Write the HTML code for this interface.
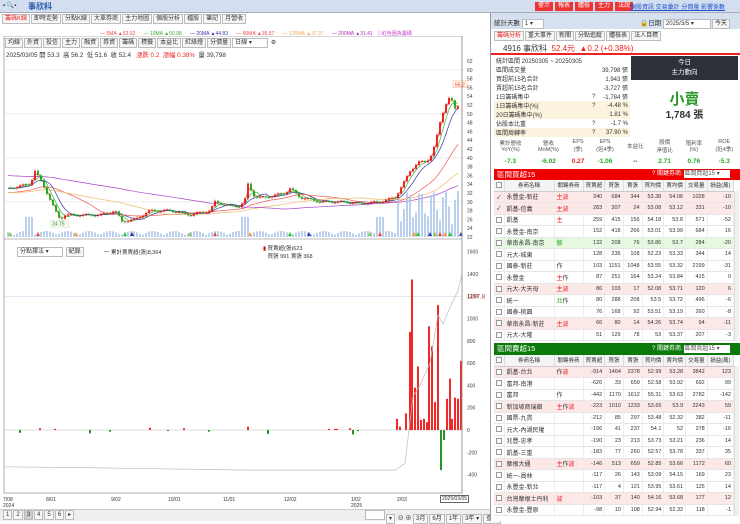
<!DOCTYPE html>
<html><head><meta charset="utf-8">
<style>
*{box-sizing:border-box;margin:0;padding:0}
body{width:740px;height:521px;overflow:hidden;background:#fff;font-family:"Liberation Sans","Noto Sans CJK TC",sans-serif;font-size:6px;color:#333;position:relative}
.abs{position:absolute}
.topbar{left:0;top:0;width:740px;height:13px;background:#d3def0;border-bottom:1px solid #aab}
.tab{display:inline-block;border:1px solid #bbb;background:#f6f6f6;padding:0 2px;height:10px;line-height:9px;font-size:6px;margin-right:1px}
.rb{display:inline-block;background:#e33;color:#fff;font-size:6px;padding:0 3px;height:9px;line-height:9px;margin-right:2px}
table{border-collapse:collapse}
.tb td{height:11.5px;border-bottom:1px solid #e6e6e6;border-right:1px solid #eee;font-size:5.5px;text-align:right;padding-right:2px;white-space:nowrap}
.tb td.l{text-align:left;padding-left:2px;font-size:6px}
.tb tr.p td{background:#fde8e8}
.tb tr.g td{background:#e6f8e0}
.tb th{height:11px;font-weight:normal;font-size:5.5px;background:#f4f4f4;border-right:1px solid #ddd;border-bottom:1px solid #ccc}
.cb{display:inline-block;width:6px;height:6px;border:1px solid #999;background:#fff;vertical-align:middle}
.st td{height:9px;font-size:6px;padding:0 2px}
</style></head><body>
<div class="abs topbar">
 <div class="abs" style="left:3px;top:2px;font-size:6px">▪ 🔍▪</div>
 <div class="abs" style="left:28px;top:1px;font-size:8px;color:#2255aa;font-weight:bold">事欣科</div>
 <div class="abs" style="left:535px;top:2px"><span class="rb">警示</span><span class="rb">報表</span><span class="rb">體檢</span><span class="rb">主力</span><span class="rb">法說</span></div>
 <div class="abs" style="left:630px;top:2px;color:#2255cc;font-size:6px;text-decoration:underline">個股資訊 交易彙計 分價量 影響係數</div>
</div>
<div class="abs" style="left:2px;top:14px"><span class="tab" style="color:#e22">籌碼K線</span><span class="tab">即時走勢</span><span class="tab">分點K線</span><span class="tab">大單券商</span><span class="tab">主力地圖</span><span class="tab">個股分析</span><span class="tab">檔股</span><span class="tab">筆記</span><span class="tab">月營收</span></div>
<div class="abs" style="left:100px;top:30px;font-size:5px;white-space:nowrap">
<span style="color:#e44">— 5MA ▲52.02</span>&nbsp;&nbsp;&nbsp;&nbsp;&nbsp;&nbsp;<span style="color:#3a3">— 10MA ▲50.98</span>&nbsp;&nbsp;&nbsp;&nbsp;&nbsp;&nbsp;<span style="color:#33a">— 20MA ▲44.83</span>&nbsp;&nbsp;&nbsp;&nbsp;&nbsp;&nbsp;<span style="color:#e44">— 60MA ▲35.57</span>&nbsp;&nbsp;&nbsp;&nbsp;&nbsp;&nbsp;<span style="color:#ea5">— 120MA ▲37.37</span>&nbsp;&nbsp;&nbsp;&nbsp;&nbsp;&nbsp;<span style="color:#a3a">— 200MA ▲31.41</span>&nbsp;&nbsp;&nbsp;<span style="color:#c4c">ⓘ紅色圈為籌碼</span>
</div>
<div class="abs" style="left:5px;top:38px;white-space:nowrap"><span class="tab">均線</span><span class="tab">外資</span><span class="tab">投信</span><span class="tab">主力</span><span class="tab">融資</span><span class="tab">券資</span><span class="tab">籌碼</span><span class="tab">標籤</span><span class="tab">本益比</span><span class="tab">紅綠燈</span><span class="tab">分價量</span><span class="tab" style="width:36px;background:#fff">日線 ▾</span> ⚙</div>
<div class="abs" style="left:6px;top:50px;font-size:6.3px;white-space:nowrap">2025/03/05 開 53.3 &nbsp;高 56.2 &nbsp;低 51.6 &nbsp;收 52.4 &nbsp;&nbsp;<span style="color:#e22">漲跌 0.2 &nbsp;漲幅 0.38%</span> &nbsp;量 39,798</div>
<svg class="abs" style="left:0;top:36px" width="490" height="475" id="ch"></svg>
<div class="abs" style="left:17px;top:247px"><span class="tab" style="width:46px;background:#fff">分點擇法 ▾</span> <span class="tab">紀錄</span></div>
<div class="abs" style="left:104px;top:248px;font-size:5.5px">一 累計賣賣超(張)8,364</div>
<div class="abs" style="left:263px;top:245px;font-size:5.5px;line-height:8px"><span style="color:#c00">▮</span> 買賣超(張)623<br>&nbsp;&nbsp;&nbsp;買張 991 賣張 368</div>
<div class="abs" style="top:497px;left:3px;font-size:5px;line-height:6px">7/08<br>2024</div>
<div class="abs" style="top:497px;left:46px;font-size:5px">8/01</div>
<div class="abs" style="top:497px;left:111px;font-size:5px">9/02</div>
<div class="abs" style="top:497px;left:168px;font-size:5px">10/01</div>
<div class="abs" style="top:497px;left:223px;font-size:5px">11/01</div>
<div class="abs" style="top:497px;left:284px;font-size:5px">12/02</div>
<div class="abs" style="top:497px;left:351px;font-size:5px;line-height:6px">1/02<br>2025</div>
<div class="abs" style="top:497px;left:397px;font-size:5px">2/03</div>
<div class="abs" style="top:495px;left:440px;font-size:5px;border:1px solid #666;padding:0 1px;background:#fff">2025/03/05</div>
<div class="abs" style="top:509px;left:0;width:490px;height:12px;background:#eee;border-top:1px solid #ccc"></div>
<div class="abs" style="top:510px;left:3px"><span class="tab">1</span><span class="tab">2</span><span class="tab" style="background:#ccc">3</span><span class="tab">4</span><span class="tab">5</span><span class="tab">6</span><span class="tab">▸</span></div>
<div class="abs" style="top:510px;left:365px;white-space:nowrap"><span class="tab" style="width:20px;background:#fff"></span><span class="tab">▾</span> ⊖ ⊕ <span class="tab">3月</span><span class="tab">6月</span><span class="tab">1年</span><span class="tab">3年 ▾</span><span class="tab">查價</span></div>

<div class="abs" style="left:490px;top:13px;width:250px;height:508px;background:#fff;border-left:1px solid #99a"></div>
<div class="abs" style="left:491px;top:13px;width:249px;height:16px;background:#d6e0ee"></div>
<div class="abs" style="left:494px;top:17px;font-size:6.5px">統計天數 <span class="tab" style="width:22px;background:#fff">1 ▾</span></div>
<div class="abs" style="left:640px;top:17px;font-size:6.5px;white-space:nowrap">🔒日期 <span class="tab" style="width:48px;background:#fff">2025/3/5 ▾</span><span class="tab">今天</span></div>
<div class="abs" style="left:494px;top:31px"><span class="tab" style="color:#e22">籌碼分析</span><span class="tab">重大事件</span><span class="tab">新聞</span><span class="tab">分點追蹤</span><span class="tab">體檢表</span><span class="tab">法人目標</span></div>
<div class="abs" style="left:491px;top:42px;width:249px;height:13px;border-bottom:2px solid #e22"></div>
<div class="abs" style="left:503px;top:43px;font-size:8px;white-space:nowrap">4916 事欣科 &nbsp;<span style="color:#e22">52.4元 &nbsp;▲0.2 (+0.38%)</span></div>
<table class="abs st" style="left:494px;top:56px;width:136px">
<tr><td>統計區間 20250305 ~ 20250305</td><td></td><td></td></tr>
<tr><td>區間成交量</td><td></td><td align="right">39,798 張</td></tr>
<tr><td>買超前15名合計</td><td></td><td align="right">1,943 張</td></tr>
<tr><td>賣超前15名合計</td><td></td><td align="right">-3,727 張</td></tr>
<tr><td>1日籌碼集中</td><td>?</td><td align="right">-1,784 張</td></tr>
<tr style="background:#fbf3dd"><td>1日籌碼集中(%)</td><td>?</td><td align="right">-4.48 %</td></tr>
<tr style="background:#fbf3dd"><td>20日籌碼集中(%)</td><td></td><td align="right">1.81 %</td></tr>
<tr><td>佔股本比重</td><td>?</td><td align="right">-1.7 %</td></tr>
<tr style="background:#fbf3dd"><td>區間周轉率</td><td>?</td><td align="right">37.90 %</td></tr>
</table>
<div class="abs" style="left:631px;top:56px;width:107px;height:24px;background:#2e3138;color:#fff;text-align:center;font-size:6.5px;line-height:10px;padding-top:2px">今日<br>主力動向</div>
<div class="abs" style="left:631px;top:88px;width:107px;text-align:center;font-size:15px;color:#2a9a2a;font-weight:bold">小賣</div>
<div class="abs" style="left:631px;top:106px;width:107px;text-align:center;font-size:10px;font-weight:bold">1,784 張</div>
<table class="abs" style="left:491px;top:137px;width:249px;font-size:5.5px;text-align:center">
<tr style="height:18px;color:#555"><td>累計營收<br>YoY(%)</td><td>營收<br>MoM(%)</td><td>EPS<br>(季)</td><td>EPS<br>(近4季)</td><td>本益比</td><td>股價<br>淨值比</td><td>殖利率<br>(%)</td><td>ROE<br>(近4季)</td></tr>
<tr style="height:12px;font-weight:bold;font-size:6.5px"><td style="color:#2a2">-7.3</td><td style="color:#2a2">-6.02</td><td style="color:#e22">0.27</td><td style="color:#2a2">-1.06</td><td>--</td><td style="color:#2a2">2.71</td><td style="color:#2a2">0.76</td><td style="color:#2a2">-5.3</td></tr>
</table>
<div class="abs" style="left:494px;top:169px;width:246px;height:11px;background:#e00;color:#fff;font-size:7.5px;padding-left:3px;line-height:11px">區間買超15<span style="position:absolute;left:158px;font-size:6px">? 關鍵券商: <span style="background:#fff;color:#555;display:inline-block;width:46px;height:8px;line-height:8px">區間買超15 ▾</span></span></div>
<table class="abs tb" style="left:494px;top:180px;width:240px" id="t1"></table>
<div class="abs" style="left:494px;top:343px;width:246px;height:12px;background:#0a7a0a;color:#fff;font-size:7.5px;padding-left:3px;line-height:12px">區間賣超15<span style="position:absolute;left:158px;font-size:6px">? 關鍵券商: <span style="background:#fff;color:#555;display:inline-block;width:46px;height:8px;line-height:8px">區間賣超15 ▾</span></span></div>
<table class="abs tb" style="left:494px;top:355px;width:240px" id="t2"></table>
<div class="abs" style="left:734px;top:191px;width:5px;height:150px;background:#f0f0f0;border-left:1px solid #ddd"></div>
<div class="abs" style="left:734px;top:366px;width:5px;height:150px;background:#f0f0f0;border-left:1px solid #ddd"></div>

<script>
function row(r){var c=r[1];var tag=c.replace(/主/g,'<span style="color:#e22">主</span>').replace(/波/g,'<span style="color:#e22">波</span>').replace(/散/g,'<span style="color:#2a2">散</span>').replace(/北/g,'<span style="color:#2a2">北</span>');
return '<tr class="'+(r[9]||'')+'"><td style="width:10px;text-align:center;padding:0">'+(r[10]?'✓':'<span class="cb"></span>')+'</td><td class="l" style="width:50px">'+r[0]+'</td><td class="l" style="width:29px">'+tag+'</td>'+r.slice(2,9).map(function(v){return '<td>'+v+'</td>'}).join('')+'</tr>';}
var head='<tr><th><span class="cb"></span></th><th>券商名稱</th><th>關鍵券商</th><th>買賣超</th><th>買張</th><th>賣張</th><th>買均價</th><th>賣均價</th><th>交易量</th><th>損益(萬)</th></tr>';
var A=[["永豐金-新莊","主波",340,684,344,"53.38","54.06",1028,-10,"p",1],["凱基-信義","主波",283,307,24,"53.08","53.12",331,-10,"p",1],["凱基","主",259,415,156,"54.18","53.8",571,-52],["永豐金-南京","",152,418,266,"53.01","53.99",684,16],["華南永昌-南京","散",132,208,76,"53.86","53.7",284,-20,"g"],["元大-城東","",128,236,108,"52.23","53.33",344,14],["國泰-新莊","作",103,1151,1048,"53.55","53.32",2199,-31],["永豐金","主作",87,251,164,"53.24","53.84",415,0],["元大-大天母","主波",86,103,17,"52.08","53.71",120,6,"p"],["統一","北作",80,288,208,"53.5","53.72",496,-6],["國泰-桃園","",76,168,92,"53.51","53.19",260,-8],["華南永昌-新莊","主波",66,80,14,"54.26","53.74",94,-11,"p"],["元大-大隆","",51,129,78,"53","53.37",207,-3]];
var B=[["凱基-台北","作波",-914,1464,2378,"52.99","53.28",3842,123,"p"],["富邦-南港","",-626,33,659,"52.58","53.92",692,99],["富邦","作",-442,1170,1612,"55.31","53.63",2782,-142],["新加坡商瑞銀","主作波",-223,1010,1233,"53.65","53.9",2243,59,"p"],["國票-九貫","",-212,85,297,"53.48","52.32",382,-11],["元大-內湖民權","",-196,41,237,"54.1","52",278,-16],["兆豐-忠孝","",-190,23,213,"53.73","53.21",236,14],["凱基-三重","",-183,77,260,"52.57","53.78",337,35],["摩根大通","主作波",-146,513,659,"52.85","53.66",1172,60,"p"],["統一-員林","",-117,26,143,"53.09","54.15",169,23],["永豐金-新北","",-117,4,121,"53.95","53.61",125,14],["台灣摩根士丹利","波",-103,37,140,"54.16","53.68",177,12,"p"],["永豐金-豐原","",-98,10,108,"52.94","52.32",118,-1]];
document.getElementById('t1').innerHTML=head+A.map(row).join('');
document.getElementById('t2').innerHTML=head+B.map(row).join('');

var s='';var O=36;
function Y(p){return 61+(62-p)*4.4-O}
s+='<rect x="4" y="0" width="458" height="457" fill="none" stroke="#999" stroke-width="0.8"/>';
for(var p=22;p<=62;p+=2){var y=Y(p);s+='<text x="467" y="'+(y+2)+'" font-size="5" fill="#444">'+p+'</text>';if(p%10==0)s+='<line x1="5" x2="462" y1="'+y+'" y2="'+y+'" stroke="#eee"/>';}
var K=[[8,33],[18,33.5],[30,34],[35,37],[40,35],[45,33],[55,28],[60,26],[65,27],[80,27],[100,27],[115,28],[122,25.5],[135,26],[150,28],[170,28],[190,27],[210,28],[215,30],[230,29],[240,29],[245,30.5],[248,34],[255,31],[265,31],[285,32],[290,33],[300,31],[320,30],[340,30],[360,29.6],[380,30],[395,31],[403,34],[410,37],[418,39],[425,39],[430,40],[435,43],[440,48],[445,52],[450,54],[455,51],[460,52.4]];
function P(x){for(var i=0;i<K.length-1;i++){if(x<=K[i+1][0]){var t=(x-K[i][0])/(K[i+1][0]-K[i][0]);return K[i][1]+t*(K[i+1][1]-K[i][1]);}}return 52.4}
var xs=[],cl=[];for(var x=8;x<=460;x+=3){xs.push(x);cl.push(P(x)+Math.sin(x*1.7)*0.25);}
function ma(n,base){var o=[];for(var i=0;i<cl.length;i++){var sm=0,c=0;for(var j=Math.max(0,i-n+1);j<=i;j++){sm+=cl[j];c++}var pre=Math.max(0,n-c);o.push((sm+pre*base)/(c+pre));}return o}
var mas=[[2,'#e44',33],[4,'#3b3',33],[7,'#33a',33],[20,'#e55',32],[40,'#eb6',32],[80,'#a4c',36]];
mas.forEach(function(m){var a=ma(m[0],m[2]);s+='<polyline fill="none" stroke="'+m[1]+'" stroke-width="0.7" points="'+a.map(function(v,i){return xs[i]+','+Y(v).toFixed(1)}).join(' ')+'"/>'});
for(var i=0;i<xs.length;i++){var x=xs[i],h=2+Math.abs(Math.sin(x*0.9))*4;if(x>395)h=8+Math.abs(Math.sin(x*1.3))*38;if((x>25&&x<35)||(x>240&&x<250)||(x>375&&x<385))h=20;s+='<rect x="'+(x-0.8)+'" y="'+(201-h)+'" width="1.6" height="'+h+'" fill="#a9c4e8"/>';}
for(var i=1;i<xs.length;i++){var o=cl[i-1],c=cl[i],x=xs[i];var up=c>=o;var col=up?'#e11':'#1a1';var hi=Math.max(o,c)+0.3,lo=Math.min(o,c)-0.3;s+='<line x1="'+x+'" x2="'+x+'" y1="'+Y(hi)+'" y2="'+Y(lo)+'" stroke="'+col+'" stroke-width="0.5"/><rect x="'+(x-0.9)+'" y="'+Y(Math.max(o,c))+'" width="1.8" height="'+Math.max(0.8,Math.abs(o-c)*4.4)+'" fill="'+col+'"/>';}
s+='<rect x="453" y="'+(Y(57.5))+'" width="14" height="7" fill="#fff4e0" stroke="#fa8" stroke-width="0.4"/><text x="455" y="'+(Y(57.5)+5.5)+'" font-size="5" fill="#e44">56.2</text>';
s+='<rect x="50" y="'+(Y(24.9)-4)+'" width="19" height="7" fill="#f4fbe8" stroke="#cdc" stroke-width="0.4"/><text x="52" y="'+(Y(24.9)+1.5)+'" font-size="5" fill="#484">24.75</text>';
[10,38,76,125,132,190,215,250,290,309,370,380,414,418,430,435,440,445,450,461].forEach(function(x,i){var c=['#8c4','#e44','#f93','#2c2','#33a'][i%5];s+='<path d="M'+x+' 196l-2 4h4z" fill="'+c+'"/>'});
s+='<line x1="4" x2="462" y1="203" y2="203" stroke="#777" stroke-width="0.6"/>';
function Z(v){return 430-O-v*0.1115}
[1600,1400,1200,1000,800,600,400,200,0,-200,-400].forEach(function(v){s+='<text x="467" y="'+(Z(v)+2)+'" font-size="5" fill="#444">'+v+'</text>'});
s+='<line x1="5" x2="462" y1="'+Z(0)+'" y2="'+Z(0)+'" stroke="#ddd"/><line x1="5" x2="462" y1="'+Z(1197.8)+'" y2="'+Z(1197.8)+'" stroke="#cde" stroke-width="0.6"/>';
s+='<text x="467" y="'+(Z(1197.8)+2)+'" font-size="6" fill="#b33">1197.8</text>';
var bars=[[20,-25],[40,15],[55,10],[90,-30],[110,-15],[150,20],[168,-10],[184,15],[209,-15],[248,30],[268,-35],[329,10],[335,10],[337,10],[350,15],[353,-40],[358,-10],[397,100],[400,30],[406,150],[410,880],[412,1350],[415,380],[418,570],[421,90],[424,100],[427,70],[429,930],[432,750],[435,250],[438,1120],[441,-360],[444,-90],[447,280],[450,460],[452,100],[455,290],[458,280],[461,620]];
bars.forEach(function(b){var v=b[1];s+='<rect x="'+(b[0]-0.9)+'" y="'+(v>0?Z(v):Z(0))+'" width="1.8" height="'+Math.abs(v*0.1115)+'" fill="'+(v>0?'#e11':'#181')+'"/>'});
s+='<polyline fill="none" stroke="#bbb" stroke-width="0.7" points="5,'+Z(-330)+' 100,'+Z(-340)+' 250,'+Z(-360)+' 395,'+Z(-360)+' 405,'+Z(-300)+' 409,'+Z(0)+' 413,'+Z(300)+' 420,'+Z(400)+' 430,'+Z(600)+' 438,'+Z(1030)+' 443,'+Z(950)+' 450,'+Z(1100)+' 458,'+Z(1250)+' 462,'+Z(1400)+'"/>';
s+='<line x1="462" x2="462" y1="0" y2="457" stroke="#999"/>';
document.getElementById('ch').innerHTML=s;
</script>
</body></html>
